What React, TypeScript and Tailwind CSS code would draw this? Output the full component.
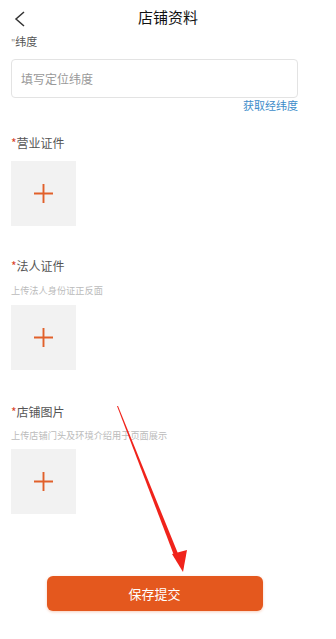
const FONT = { fontFamily: '"Noto Sans CJK SC", "Noto Sans", sans-serif' };

function Upload() {
  return (
    <div className="flex h-[65px] w-[65px] items-center justify-center bg-[#f2f2f2]">
      <svg width="19" height="19" viewBox="0 0 20 20" aria-hidden>
        <path d="M10 0v20M0 10h20" stroke="#e1602a" strokeWidth="2" />
      </svg>
    </div>
  );
}

function Label({ text }: { text: string }) {
  return (
    <p className="text-[12px] leading-[16px] text-[#555]">
      <span className="text-[#d9442b]">*</span>
      {text}
    </p>
  );
}

export default function App() {
  return (
    <div
      className="relative flex h-[639px] w-[336px] flex-col overflow-hidden bg-white"
      style={FONT}
    >
      {/* Header */}
      <div className="relative flex h-[35px] shrink-0 items-center justify-center">
        <svg
          className="absolute left-[14px] top-[11px]"
          width="12"
          height="16"
          viewBox="0 0 12 16"
          aria-hidden
        >
          <polyline
            points="10,1 2,8 10,15"
            fill="none"
            stroke="#333"
            strokeWidth="1.5"
          />
        </svg>
        <h1 className="text-[15px] font-normal text-[#111]">店铺资料</h1>
      </div>

      <div className="flex flex-col px-[11px]">
        <p className="text-[11px] leading-[13px] text-[#555]">
          <span className="text-[9px] text-[#888]">"</span>纬度
        </p>

        <div className="mt-[10px] flex h-[39px] w-[287px] items-center rounded-[4px] border border-[#e3e3e3] px-[9px]">
          <span className="text-[12px] text-[#999]">填写定位纬度</span>
        </div>
        <p className="mt-0 w-[287px] text-right text-[11px] leading-[14px] text-[#3d8cc9]">
          获取经纬度
        </p>

        <div className="mt-[23px]">
          <Label text="营业证件" />
        </div>
        <div className="mt-[10px]">
          <Upload />
        </div>

        <div className="mt-[32px]">
          <Label text="法人证件" />
        </div>
        <p className="mt-[10px] text-[9.2px] leading-[13px] text-[#bbb]">
          上传法人身份证正反面
        </p>
        <div className="mt-[8px]">
          <Upload />
        </div>

        <div className="mt-[34px]">
          <Label text="店铺图片" />
        </div>
        <p className="mt-[9px] text-[9.2px] leading-[13px] text-[#bbb]">
          上传店铺门头及环境介绍用于页面展示
        </p>
        <div className="mt-[7px]">
          <Upload />
        </div>
      </div>

      <div className="mt-auto flex justify-center pb-[28px] pr-[27px]">
        <button className="h-[35px] w-[216px] rounded-[6px] bg-[#e4581e] text-[13px] text-white shadow-[0_1px_3px_rgba(228,88,30,0.3)]">
          保存提交
        </button>
      </div>

      {/* Red annotation arrow */}
      <svg
        className="pointer-events-none absolute left-0 top-0"
        width="336"
        height="639"
        viewBox="0 0 336 639"
        aria-hidden
      >
        <polygon points="117,406 118,406 179,556 175,558" fill="#f0231b" />
        <polygon points="172,554 187,550 183,572" fill="#f0231b" />
      </svg>
    </div>
  );
}
